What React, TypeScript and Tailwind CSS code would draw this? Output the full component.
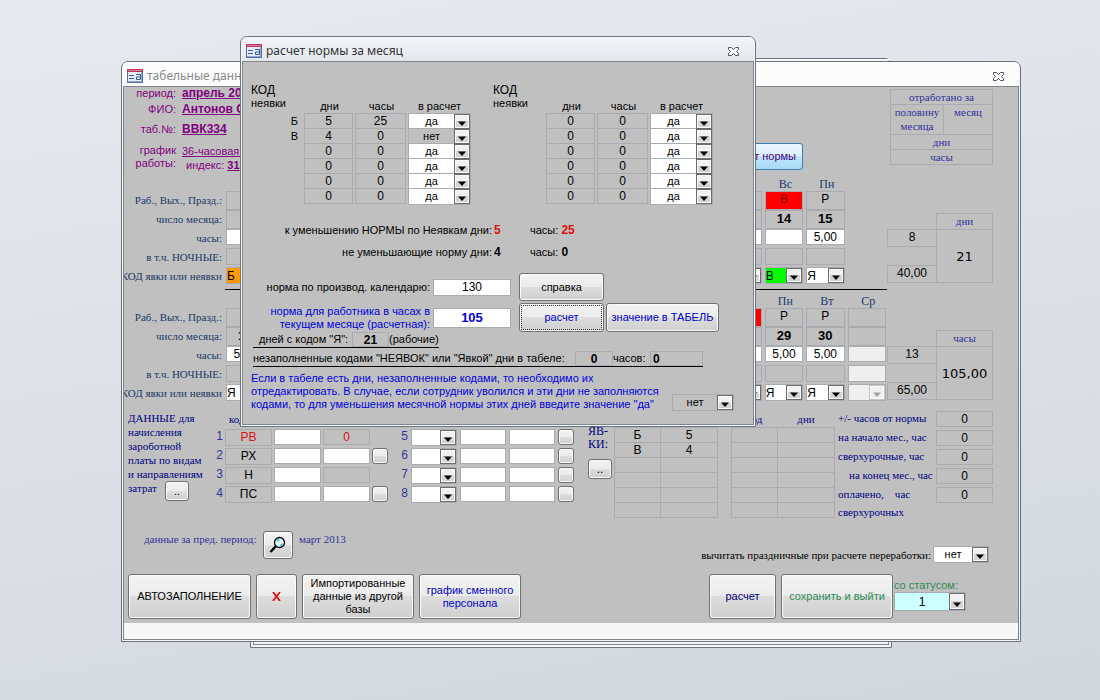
import type { ReactNode } from "react";
import clsx from "clsx";

const BTN =
  "rounded-[3px] border border-[#707070] bg-[linear-gradient(#f3f3f3,#ebebeb_49%,#dddddd_50%,#cfcfcf)] shadow-[inset_0_0_0_1px_#fafafa] text-center leading-[13px]";
const CELL = "border border-[#a9abb0]";

const HOURS_FIRST = Array.from({ length: 15 }, (_, i) => i + 1);
const HOURS_SECOND = Array.from({ length: 15 }, (_, i) => i + 16);
const WEEK = ["Вс", "Пн", "Вт", "Ср", "Чт", "Пт", "Сб"];

/* ── Small controls ── */

function FormIcon() {
  return (
    <svg width="16" height="14" viewBox="0 0 16 14" className="shrink-0" aria-hidden="true">
      <rect x="0.5" y="0.5" width="15" height="13" fill="#e4ecf9" stroke="#5a6c9c" />
      <rect x="0" y="0" width="16" height="3" fill="#b8365a" />
      <rect x="1" y="1" width="14" height="1" fill="#d9819a" />
      <path d="M2 6.5h5M2 9.5h5" stroke="#3b5a9a" />
      <path d="M9 5.5h4.5v5H9.5v-2.5h4" fill="none" stroke="#3b5a9a" />
      <path d="M1 12.5h14M14.5 3v10" stroke="#8fa6d6" />
    </svg>
  );
}

function CloseButton() {
  return (
    <button type="button" aria-label="Закрыть" className="ml-auto shrink-0">
      <svg width="13" height="11" viewBox="0 0 13 11" aria-hidden="true">
        <path
          d="M1.500 1.500h3l2 2 2-2h3v2l-2 2 2 2v2h-3l-2-2-2 2h-3v-2l2-2-2-2z"
          fill="#fff"
          stroke="#50555e"
        />
      </svg>
    </button>
  );
}

type ComboProps = { label: string; value?: string; options?: string[]; className?: string; align?: string; disabled?: boolean };

function Combo({ label, value = "", options = [], className = "h-[17px] bg-white", align = "text-center", disabled }: ComboProps) {
  return (
    <span className={clsx("flex w-full items-stretch", CELL, className)}>
      <select
        aria-label={label}
        defaultValue={value}
        disabled={disabled}
        className={clsx("min-w-0 flex-1 appearance-none bg-transparent leading-none outline-none", align)}
      >
        {[value, ...options].map((o) => (
          <option key={o}>{o}</option>
        ))}
      </select>
      <span
        className={clsx(
          "flex w-4 shrink-0 items-end justify-center border pb-[2px] shadow-[inset_0_0_0_1px_#fafafa]",
          disabled ? "border-[#c4c4c4] bg-[#efefef]" : "border-[#6c6c6c] bg-[linear-gradient(#f1f1f1_50%,#d4d4d4_50%)]"
        )}
      >
        <svg width="8" height="5" viewBox="0 0 8 5" aria-hidden="true">
          <path d="M0 .5h8L4 5z" fill={disabled ? "#a0a0a0" : "#000"} />
        </svg>
      </span>
    </span>
  );
}

function Field({ label, value = "", className }: { label: string; value?: string; className?: string }) {
  return (
    <input
      aria-label={label}
      defaultValue={value}
      className={clsx("block min-w-0 bg-white text-center outline-none", CELL, className)}
    />
  );
}

function Frame({ title, titleClass, barClass, children }: { title: string; titleClass: string; barClass: string; children: ReactNode }) {
  return (
    <div className="overflow-hidden rounded-t-[7px] border border-[#6b737e] bg-[#f7f7f7] px-px pb-px">
      <div className={clsx("flex h-6 items-center gap-1 pr-[14px] pl-1 pt-1", barClass)}>
        <FormIcon />
        <h2 className={clsx("font-['Noto_Sans',sans-serif] text-[12px] leading-4", titleClass)}>{title}</h2>
        <CloseButton />
      </div>
      <div className="border border-[#7e858e] bg-[#c0c0c0]">{children}</div>
    </div>
  );
}

/* ── Timesheet ── */

function HalfMonth({ days, spare }: { days: number[]; spare?: boolean }) {
  const name = (text: string) => (
    <th scope="row" className="h-[19px] overflow-hidden p-0 font-['Liberation_Serif',serif] text-[11px] font-normal text-[#1c3a66]">
      <div className="flex justify-end pr-[2px] leading-[17px] whitespace-nowrap">{text}</div>
    </th>
  );
  const red = (d: number) => d % 7 === 0;
  const code = (d: number) => (d === 1 ? "Б" : red(d) ? "В" : "Я");

  return (
    <table className="w-full table-fixed border-collapse text-center text-[12px] leading-[15px] [&_td]:py-0 [&_td]:pr-px [&_td]:pl-[2px] [&_td]:align-top">
      <colgroup>
        <col className="w-[100px]" />
        {Array.from({ length: 16 }, (_, i) => (
          <col key={i} />
        ))}
      </colgroup>
      <thead>
        <tr className="h-[13px] font-['Liberation_Serif',serif] text-[12px] leading-[13px] text-[#1c3a66]">
          <td />
          {days.map((d) => (
            <th key={d} scope="col" className="p-0 pl-1 font-normal">
              {WEEK[d % 7]}
            </th>
          ))}
          <th className="p-0 pl-1 font-normal">{spare ? "Ср" : ""}</th>
        </tr>
      </thead>
      <tbody>
        <tr>
          {name("Раб., Вых., Празд.:")}
          {days.map((d) => (
            <td key={d}>
              <div className={clsx("h-[19px]", CELL, red(d) && "bg-[#ff0000] text-[#7a0000]")}>{red(d) ? "В" : "Р"}</div>
            </td>
          ))}
          <td>{spare && <div className={clsx("h-[19px]", CELL)} />}</td>
        </tr>
        <tr>
          {name("число месяца:")}
          {days.map((d) => (
            <td key={d}>
              <div className={clsx("h-[19px] text-[13px] font-bold", CELL)}>{d}</div>
            </td>
          ))}
          <td>{spare && <div className={clsx("h-[19px]", CELL)} />}</td>
        </tr>
        <tr>
          {name("часы:")}
          {days.map((d) => (
            <td key={d}>
              <Field label={`часы ${d}`} value={red(d) || d === 1 ? "" : "5,00"} className="h-4 w-full" />
            </td>
          ))}
          <td>{spare && <div className={clsx("h-4 bg-[#efefef]", CELL)} />}</td>
        </tr>
        <tr>
          {name("в т.ч. НОЧНЫЕ:")}
          {days.map((d) => (
            <td key={d}>
              <div className={clsx("h-[17px]", CELL)} />
            </td>
          ))}
          <td>{spare && <div className={clsx("h-[17px] bg-[#efefef]", CELL)} />}</td>
        </tr>
        <tr>
          {name("КОД явки или неявки")}
          {days.map((d) => (
            <td key={d}>
              <Combo
                label={`код ${d}`}
                value={code(d)}
                align="text-left"
                className={clsx("h-[17px]", d === 1 ? "bg-[#ff9900]" : red(d) ? "bg-[#00ff00]" : "bg-white")}
              />
            </td>
          ))}
          <td>{spare && <Combo label="код 31" disabled className="h-[17px] bg-[#efefef]" />}</td>
        </tr>
      </tbody>
    </table>
  );
}

function HalfTotal({ title, days, hours, total }: { title: string; days: string; hours: string; total: string }) {
  return (
    <div className="grid w-[106px] shrink-0 grid-cols-[49px_1fr] content-start pt-[35px] text-center text-[12px] leading-[15px]">
      <div />
      <div className="h-4 border border-b-0 border-[#a9abb0] font-['Liberation_Serif',serif] text-[11px] text-[#333399]">{title}</div>
      <div className="flex flex-col justify-between">
        <div className="h-[18px] border border-r-0 border-[#a9abb0]">{days}</div>
        <div className="h-[18px] border border-r-0 border-[#a9abb0]">{hours}</div>
      </div>
      <div className="flex h-[54px] items-center justify-center border border-[#a9abb0] font-['DejaVu_Sans',sans-serif] text-[13px]">
        {total}
      </div>
    </div>
  );
}

function WorkedHeader() {
  return (
    <table className="mt-[2px] mr-[25px] ml-auto w-[103px] table-fixed border-collapse self-start text-center font-['Liberation_Serif',serif] text-[11px] leading-[14px] text-[#333399] [&_td]:border [&_td]:border-[#a9abb0] [&_td]:p-0">
      <colgroup>
        <col className="w-[53px]" />
        <col />
      </colgroup>
      <tbody>
        <tr>
          <td colSpan={2}>отработано за</td>
        </tr>
        <tr className="h-[30px] align-top">
          <td>
            половину
            <br />
            месяца
          </td>
          <td>месяц</td>
        </tr>
        <tr>
          <td colSpan={2}>дни</td>
        </tr>
        <tr>
          <td colSpan={2}>часы</td>
        </tr>
      </tbody>
    </table>
  );
}

/* ── Cost lines ── */

const KINDS = [
  { n: 1, kind: "РВ", sum: "0", tick: false, red: true, fixed: true },
  { n: 2, kind: "РХ", sum: "", tick: true, red: false, fixed: false },
  { n: 3, kind: "Н", sum: "", tick: false, red: false, fixed: true },
  { n: 4, kind: "ПС", sum: "", tick: true, red: false, fixed: false },
];

function CostLines() {
  return (
    <>
      <div className="w-[88px] shrink-0 pl-1 font-['Liberation_Serif',serif] text-[11px] leading-[14px] text-[#000080]">
        ДАННЫЕ для
        <br />
        начисления зароботной платы по видам
        <br />
        <span className="whitespace-nowrap">и направлениям</span>
        <div className="flex gap-[6px]">
          <span className="w-[31px]">затрат</span>
          <button type="button" className={clsx(BTN, "h-5 w-6 font-['Liberation_Sans',sans-serif] text-black")}>
            ..
          </button>
        </div>
      </div>
      <div className="w-[187px] shrink-0 text-[12px]">
        <div className="h-[18px] pl-[17px] font-['Liberation_Serif',serif] text-[11px] leading-4 text-[#000080]">код</div>
        {KINDS.map((k) => (
          <div key={k.n} className="flex h-[19px] items-start gap-[2px]">
            <span className="w-[11px] text-right leading-[15px] text-[#333399]">{k.n}</span>
            <div className={clsx("h-[17px] w-[47px] text-center leading-[15px]", CELL, k.red && "text-[#dd1111]")}>{k.kind}</div>
            <Field label={`код ${k.n}`} className="h-4 w-[47px]" />
            {k.fixed ? (
              <div className={clsx("h-4 w-[47px] text-center leading-[14px] text-[#dd1111]", CELL)}>{k.sum}</div>
            ) : (
              <Field label={`сумма ${k.n}`} className="h-4 w-[47px]" />
            )}
            {k.tick && <button type="button" aria-label={`строка ${k.n}`} className={clsx(BTN, "h-4 w-4")} />}
          </div>
        ))}
      </div>
      <div className="w-[180px] shrink-0 pt-[18px] text-[12px]">
        {[5, 6, 7, 8].map((n) => (
          <div key={n} className="flex h-[19px] items-start gap-[3px]">
            <span className="w-[9px] text-right leading-[15px] text-[#333399]">{n}</span>
            <div className="w-[46px]">
              <Combo label={`вид ${n}`} />
            </div>
            <Field label={`код ${n}`} className="h-4 w-[46px]" />
            <Field label={`сумма ${n}`} className="h-4 w-[46px]" />
            <button type="button" aria-label={`строка ${n}`} className={clsx(BTN, "h-4 w-4")} />
          </div>
        ))}
      </div>
    </>
  );
}

function CodeTable({ rows }: { rows: string[][] }) {
  return (
    <table className="w-[104px] shrink-0 table-fixed border-collapse text-center text-[12px] leading-[14px] [&_td]:h-[15px] [&_td]:border [&_td]:border-[#a9abb0] [&_td]:p-0">
      <colgroup>
        <col className="w-[46px]" />
        <col />
      </colgroup>
      <thead>
        <tr className="font-['Liberation_Serif',serif] text-[11px] leading-4 text-[#000080]">
          <th className="p-0 font-normal">код</th>
          <th className="p-0 font-normal">дни</th>
        </tr>
      </thead>
      <tbody>
        {rows.map(([code, days], i) => (
          <tr key={i}>
            <td>{code}</td>
            <td>{days}</td>
          </tr>
        ))}
      </tbody>
    </table>
  );
}

const BALANCE = ["+/- часов от нормы", "на начало мес., час", "сверхурочные, час", "\u2003на конец мес., час", "оплачено,\u2003час"];

function Balance() {
  return (
    <div className="mr-[25px] min-w-0 flex-1 text-[12px]">
      {BALANCE.map((b) => (
        <div key={b} className="flex h-[19px] items-start justify-between">
          <span className="font-['Liberation_Serif',serif] text-[11px] leading-[15px] whitespace-nowrap text-[#000080]">{b}</span>
          <span className={clsx("h-4 w-[57px] shrink-0 text-center leading-[14px]", CELL)}>0</span>
        </div>
      ))}
      <div className="font-['Liberation_Serif',serif] text-[11px] leading-[13px] text-[#000080]">сверхурочных</div>
    </div>
  );
}

/* ── Main window ── */

function TimesheetWindow() {
  return (
    <Frame title="табельные данные" titleClass="text-[#8b8b8b]" barClass="bg-[#fcfcfc]">
      <div className="flex h-[91px]">
        <dl className="grid grid-cols-[52px_1fr] content-start gap-x-[6px] gap-y-px text-[11px] leading-[19px] whitespace-nowrap text-[#800080] [&>dt]:text-right">
          <dt className="leading-[12px]">период:</dt>
          <dd className="text-[12px] leading-[12px] font-bold underline">апрель 2013</dd>
          <dt>ФИО:</dt>
          <dd className="text-[12px] font-bold underline">Антонов О.</dd>
          <dt>таб.№:</dt>
          <dd className="text-[12px] font-bold underline">ВВК334</dd>
          <dt className="pt-1 leading-[13px]">
            график
            <br />
            работы:
          </dt>
          <dd className="pt-1 leading-[14px]">
            <span className="underline">36-часовая рабочая</span>
            <br />
            <span className="pl-1">индекс: </span>
            <b className="underline">31</b>
          </dd>
        </dl>
        <div className="flex flex-1 items-end justify-end pb-2">
          <button
            type="button"
            className="h-[27px] w-[104px] rounded-[3px] border border-[#3c7fb1] bg-[linear-gradient(#eaf6fd,#d9f0fc_49%,#bee6fd_50%,#a7d9f5)] pr-[6px] text-right text-[11px] text-[#4b0082]"
          >
            расчет нормы
          </button>
        </div>
        <div className="flex w-[215px] shrink-0">
          <WorkedHeader />
        </div>
      </div>

      <section className="mr-[25px] flex">
        <div className="min-w-0 flex-1">
          <HalfMonth days={HOURS_FIRST} />
        </div>
        <HalfTotal title="дни" days="8" hours="40,00" total="21" />
      </section>
      <hr className="mt-[3px] mr-[131px] ml-[101px] border-black" />
      <section className="mt-[5px] mr-[25px] flex">
        <div className="min-w-0 flex-1">
          <HalfMonth days={HOURS_SECOND} spare />
        </div>
        <HalfTotal title="часы" days="13" hours="65,00" total="105,00" />
      </section>

      <section className="mt-2 flex items-start">
        <CostLines />
        <div className="flex w-[35px] shrink-0 flex-col items-start gap-2 pt-[14px] pl-[9px] font-['Liberation_Serif',serif] text-[12px] leading-[13px] text-[#000080]">
          <span>
            ЯВ-
            <br />
            КИ:
          </span>
          <button type="button" className={clsx(BTN, "h-5 w-6 font-['Liberation_Sans',sans-serif] text-black")}>
            ..
          </button>
        </div>
        <CodeTable
          rows={[
            ["Б", "5"],
            ["В", "4"],
            ["", ""],
            ["", ""],
            ["", ""],
            ["", ""],
          ]}
        />
        <div className="w-[13px] shrink-0" />
        <CodeTable rows={Array.from({ length: 6 }, () => ["", ""])} />
        <div className="w-[3px] shrink-0" />
        <Balance />
      </section>

      <section className="mt-3 flex h-[30px] items-start pl-5 font-['Liberation_Serif',serif] text-[11px] leading-4">
        <span className="w-[119px] whitespace-nowrap text-[#333399]">данные за пред. период:</span>
        <button type="button" aria-label="Найти" className={clsx(BTN, "flex h-7 w-[30px] items-center justify-center")}>
          <svg width="18" height="18" viewBox="0 0 18 18" aria-hidden="true">
            <circle cx="10.5" cy="6.5" r="5" fill="#f4ffff" stroke="#000" strokeWidth="1.3" />
            <path d="M8 5.5q.5-2 2.5-2M11 9.500q2-.5 2.500-2" fill="none" stroke="#00c8e0" strokeWidth="1.3" />
            <path d="M7 10l-5.500 6" stroke="#000" strokeWidth="2.400" />
          </svg>
        </button>
        <span className="ml-[6px] text-[#333399]">март 2013</span>
        <label className="mt-[15px] mr-[29px] ml-auto flex items-center gap-[2px] whitespace-nowrap">
          вычитать праздничные при расчете переработки:
          <span className="w-14 font-['Liberation_Sans',sans-serif]">
            <Combo label="вычитать праздничные" value="нет" options={["да"]} />
          </span>
        </label>
      </section>

      <section className="mt-[13px] flex items-start gap-[5px] pb-1 pl-1 text-[11px]">
        <button type="button" className={clsx(BTN, "h-[45px] w-[123px]")}>
          АВТОЗАПОЛНЕНИЕ
        </button>
        <button type="button" aria-label="Удалить" className={clsx(BTN, "flex h-[45px] w-[41px] items-center justify-center")}>
          <svg width="9" height="9" viewBox="0 0 9 9" aria-hidden="true">
            <path d="M1 0l7 9M8 0L1 9" stroke="#dd1111" strokeWidth="1.800" />
          </svg>
        </button>
        <button type="button" className={clsx(BTN, "h-[45px] w-28")}>
          Импортированные данные из другой базы
        </button>
        <button type="button" className={clsx(BTN, "h-[45px] w-[102px] text-[#0000cc]")}>
          график сменного персонала
        </button>
        <button type="button" className={clsx(BTN, "ml-auto h-[45px] w-[67px] text-[#000080]")}>
          расчет
        </button>
        <button type="button" className={clsx(BTN, "h-[45px] w-28 text-[#2e8b57]")}>
          сохранить и выйти
        </button>
        <div className="mr-[52px] -ml-1 w-[72px] pt-1 leading-[14px] text-[#2e8b57]">
          со статусом:
          <div className="text-[12px] text-black">
            <Combo label="со статусом" value="1" className="h-[19px] bg-[#ccffff]" />
          </div>
        </div>
      </section>
      <div className="h-4 bg-[#f7f7f7]" />
    </Frame>
  );
}

/* ── Dialog ── */

function AbsenceTable({ codes, days, hours, flags }: { codes: string[]; days: number[]; hours: number[]; flags: string[] }) {
  return (
    <div className="flex">
      <div className="w-[50px] shrink-0 text-[11px] leading-[13px]">
        <span className="text-[12px]">КОД</span>
        <br />
        неявки
        <div className="pt-[4px] pr-[3px] text-right leading-[15px]">
          {codes.map((c) => (
            <div key={c}>{c}</div>
          ))}
        </div>
      </div>
      <table className="mt-[14px] ml-[3px] table-fixed border-collapse text-center text-[12px] leading-[14px]">
        <thead>
          <tr className="h-[15px] text-[11px]">
            <th className="w-[51px] p-0 font-normal">дни</th>
            <th className="w-[53px] p-0 font-normal">часы</th>
            <th className="w-[63px] p-0 font-normal">в расчет</th>
          </tr>
        </thead>
        <tbody>
          {flags.map((f, i) => (
            <tr key={i}>
              <td className="p-0 pr-[2px]">
                <div className={clsx("-mb-px h-4", CELL)}>{days[i]}</div>
              </td>
              <td className="p-0 pr-[2px]">
                <div className={clsx("-mb-px h-4", CELL)}>{hours[i]}</div>
              </td>
              <td className="p-0">
                <div className="-mb-px h-4 text-[11px]">
                  <Combo
                    label={`в расчет ${i + 1}`}
                    value={f}
                    options={[f === "да" ? "нет" : "да"]}
                    className={clsx("h-[17px]", f === "да" ? "bg-white" : "bg-[#c0c0c0]")}
                  />
                </div>
              </td>
            </tr>
          ))}
        </tbody>
      </table>
    </div>
  );
}

function NormDialog() {
  const zero = [0, 0, 0, 0, 0, 0];
  return (
    <Frame title="расчет нормы за месяц" titleClass="text-[#333]" barClass="bg-[linear-gradient(#f3f5f8,#e3e7ec)]">
      <div className="px-2 pt-[22px] pb-[13px] text-[11px] text-black">
        <div className="flex gap-[22px]">
          <AbsenceTable codes={["Б", "В"]} days={[5, 4, 0, 0, 0, 0]} hours={[25, 0, 0, 0, 0, 0]} flags={["да", "нет", "да", "да", "да", "да"]} />
          <AbsenceTable codes={[]} days={zero} hours={zero} flags={["да", "да", "да", "да", "да", "да"]} />
        </div>

        <div className="mt-4 grid grid-cols-[241px_38px_auto] leading-[22px] [&_b]:text-[12px]">
          <span className="text-right">к уменьшению НОРМЫ по Неявкам дни:</span>
          <b className="pl-[2px] text-[#dd1111]">5</b>
          <span>
            часы: <b className="text-[#dd1111]">25</b>
          </span>
          <span className="text-right">не уменьшающие норму дни:</span>
          <b className="pl-[2px]">4</b>
          <span>
            часы: <b>0</b>
          </span>
        </div>

        <div className="mt-[10px] grid grid-cols-[179px_78px_auto] items-center gap-x-[3px] gap-y-[2px]">
          <label htmlFor="calendar" className="text-right whitespace-nowrap">
            норма по производ. календарю:
          </label>
          <input id="calendar" defaultValue="130" className={clsx("h-[17px] w-full bg-white text-center text-[12px]", CELL)} />
          <div className="pl-[5px]">
            <button type="button" className={clsx(BTN, "h-7 w-[85px]")}>
              справка
            </button>
          </div>
          <label htmlFor="worker" className="text-right leading-[13px] whitespace-nowrap text-[#0000dd]">
            норма для работника в часах в<br />
            текущем месяце (расчетная):
          </label>
          <input id="worker" defaultValue="105" className={clsx("h-5 w-full bg-white text-center text-[13px] font-bold text-[#0000dd]", CELL)} />
          <div className="flex gap-[2px] pl-[5px]">
            <button type="button" className={clsx(BTN, "h-[29px] w-[85px] border-[#3c9fd1] p-px text-[#0000cc]")}>
              <span className="flex h-full items-center justify-center border border-dotted border-[#333]">расчет</span>
            </button>
            <button type="button" className={clsx(BTN, "h-[29px] w-[113px] whitespace-nowrap text-[#0000cc]")}>
              значение в ТАБЕЛЬ
            </button>
          </div>
        </div>

        <div className="ml-[2px] flex w-[186px] items-end border-b border-black pl-[6px] leading-[15px] whitespace-nowrap">
          <span className="w-[93px]">дней с кодом "Я":</span>
          <b className={clsx("h-[15px] w-[37px] text-center text-[12px] leading-[14px]", CELL)}>21</b>
          <span>(рабочие)</span>
        </div>
        <div className="mt-[3px] ml-[2px] flex w-[450px] items-end border-b border-black leading-[15px] whitespace-nowrap">
          <span className="w-[322px]">незаполненные кодами "НЕЯВОК" или "Явкой" дни в табеле:</span>
          <b className={clsx("h-[15px] w-[38px] text-center text-[12px] leading-[14px]", CELL)}>0</b>
          <span className="w-[37px]">часов:</span>
          <b className={clsx("h-[15px] flex-1 pl-[2px] text-[12px] leading-[14px]", CELL)}>0</b>
        </div>

        <div className="mt-[5px] flex items-end justify-between pr-[11px]">
          <p className="leading-[13px] whitespace-nowrap text-[#0000dd]">
            Если в табеле есть дни, незаполненные кодами, то необходимо их
            <br />
            отредактировать. В случае, если сотрудник уволился и эти дни не заполняются
            <br />
            кодами, то для уменьшения месячной нормы этих дней введите значение "да"
          </p>
          <div className="w-[62px] shrink-0">
            <Combo label="уменьшать норму" value="нет" options={["да"]} className="h-[17px] bg-[#c0c0c0]" />
          </div>
        </div>
      </div>
    </Frame>
  );
}

export default function App() {
  return (
    <div className="relative min-h-screen overflow-hidden bg-[linear-gradient(170deg,#e7eaef,#d2d7de)] font-['Liberation_Sans',sans-serif]">
      <div className="absolute top-[58px] left-[250px] h-[590px] w-[642px] rounded-t-[7px] border border-[#6b737e] bg-[#f7f7f7]">
        <div className="h-full border border-[#f7f7f7] p-px">
          <div className="h-full border border-[#7e858e]" />
        </div>
      </div>
      <main className="relative mt-[61px] mr-[79px] mb-14 ml-[121px]">
        <TimesheetWindow />
      </main>
      <div role="dialog" aria-label="расчет нормы за месяц" className="absolute top-9 left-[240px] w-[516px]">
        <NormDialog />
      </div>
    </div>
  );
}
